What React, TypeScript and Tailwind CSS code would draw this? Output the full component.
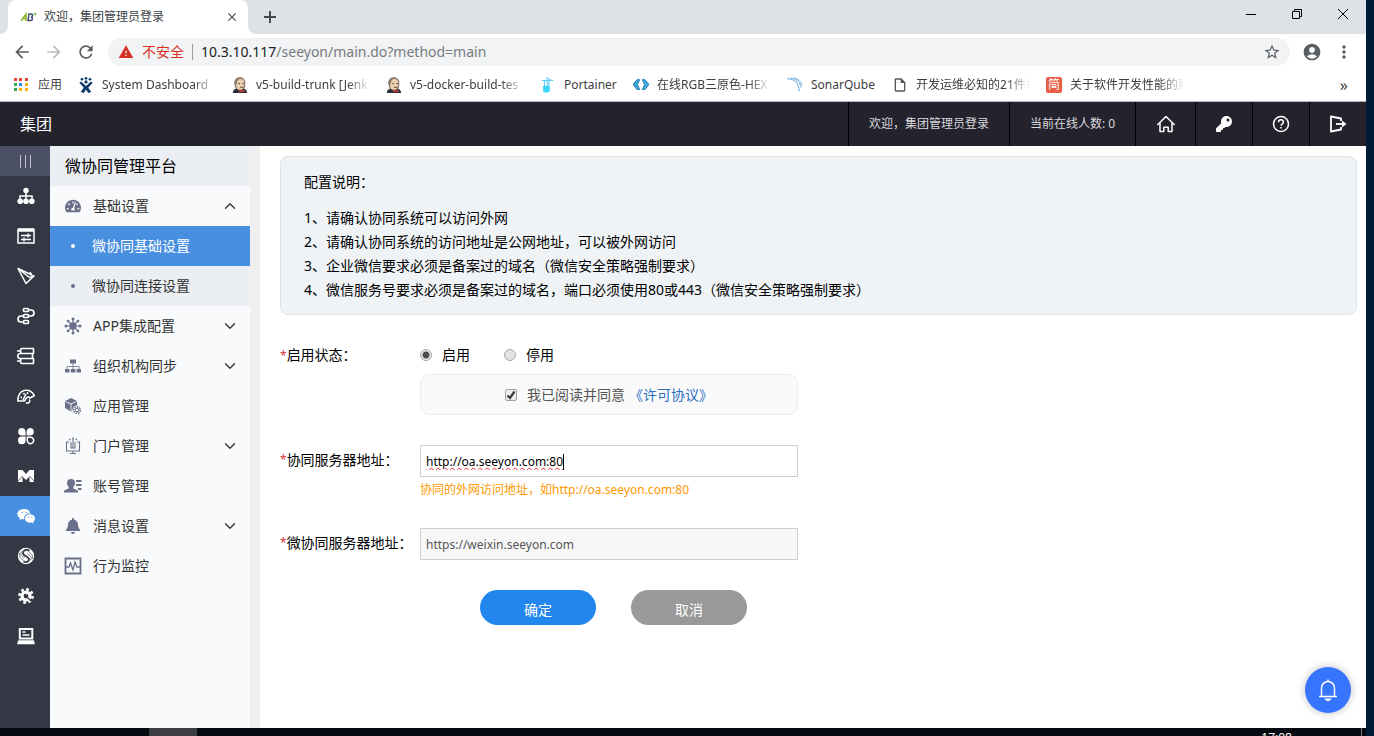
import type { ReactNode } from "react";
import { clsx } from "clsx";
import { ChevronDown, ChevronUp } from "lucide-react";
import { FaBell, FaKey, FaTachometerAlt } from "react-icons/fa";
import {
  MdAccountCircle,
  MdArrowBack,
  MdArrowForward,
  MdClose,
  MdMoreVert,
  MdOutlineInsertDriveFile,
  MdRefresh,
  MdStarBorder,
  MdWarning,
} from "react-icons/md";

type IconProps = { children: ReactNode; className?: string };

// 18px grid, drawn with currentColor
function Icon({ children, className = "size-[18px]" }: IconProps) {
  return (
    <svg
      viewBox="0 0 18 18"
      className={className}
      fill="none"
      stroke="currentColor"
      strokeWidth="1.5"
      aria-hidden="true"
    >
      {children}
    </svg>
  );
}

const jenkinsIcon = (
  <Icon className="size-4">
    <path d="M1 18c0-4 3-5 5-5h6c3 0 5 2 5 5z" fill="#24303a" stroke="none" />
    <path d="M3.500 7c0-4 2.500-6 5.500-6s5.500 2 5.500 6-1.500 8-5.500 8-5.500-4-5.500-8z" fill="#ecd0ae" stroke="#5b4a3f" strokeWidth="1" />
    <path d="M3 9C1.500 3 5 0 9 .5c3 0 4.500 1 5 3C11 2 9 2 7 3 5.500 4 6 7 4.500 9z" fill="#8a7a6a" stroke="none" />
    <path d="M7 7.500h2M11.500 7.500h2M9 11.500h4" stroke="#4a3a30" strokeWidth="1" />
    <path d="M8 14l3 1.500 3-1.500v3.500l-3-1-3 1z" fill="#d33833" stroke="none" />
  </Icon>
);

const bookmarks = [
  {
    title: "System Dashboard",
    width: "w-[114px]",
    icon: (
      <Icon className="size-4">
        <g fill="#0b3a6b" stroke="none">
          <circle cx="4.500" cy="2.500" r="1.500" />
          <circle cx="9" cy="1.500" r="1.500" />
          <circle cx="13.500" cy="2.500" r="1.500" />
          <circle cx="9" cy="5.500" r="1.800" />
          <path d="M3.500 5L9 10l5.500-5 2 1.500-5 5.500 3.500 5-3.500 1L9 14l-2.500 4L3 17l3.500-5-5-5.500z" />
        </g>
      </Icon>
    ),
  },
  { title: "v5-build-trunk [Jenk", width: "w-[114px]", icon: jenkinsIcon },
  { title: "v5-docker-build-tes", width: "w-[114px]", icon: jenkinsIcon },
  {
    title: "Portainer",
    width: "w-[53px]",
    icon: (
      <Icon className="size-4">
        <path d="M2 4h13M8 0v13M8 1l5 3M5 4v9M10 4v6" stroke="#5ccdf6" strokeWidth="1.200" />
        <path d="M3.500 10h7.500v6c-1 2-6.500 2-7.500 0z" fill="#3cd5fb" stroke="none" />
      </Icon>
    ),
  },
  {
    title: "在线RGB三原色-HEX",
    width: "w-[114px]",
    icon: (
      <Icon className="size-4">
        <path
          d="M7.500 3H4.500L0 8.500 4.500 14h3L5 8.500zM10.500 3h3L18 8.500 13.500 14h-3L13 8.500z"
          fill="#42a8dd"
          stroke="#1874ac"
          strokeWidth="1"
        />
      </Icon>
    ),
  },
  {
    title: "SonarQube",
    width: "w-[65px]",
    icon: (
      <Icon className="size-4">
        <path d="M0 2c9 0 13 5 14 14M4 1c6 1 11 5 12 11M8 1c4 1 8 4 9 8" stroke="#64a9dc" strokeWidth="1.100" />
      </Icon>
    ),
  },
  {
    title: "开发运维必知的21件事",
    width: "w-[114px]",
    icon: <MdOutlineInsertDriveFile className="size-4 text-[#55585c]" />,
  },
  {
    title: "关于软件开发性能的那",
    width: "w-[114px]",
    icon: (
      <span className="flex size-4 items-center justify-center rounded-xs bg-[#e65f45] text-xs text-white">简</span>
    ),
  },
];

const appColors = [
  "bg-[#ea4335]", "bg-[#ea4335]", "bg-[#ea4335]",
  "bg-[#34a853]", "bg-[#1a88f0]", "bg-[#fbae08]",
  "bg-[#34a853]", "bg-[#fbae08]", "bg-[#fbae08]",
];

const railItems = [
  {
    label: "组织",
    icon: (
      <Icon>
        <path d="M9 5v8M3 13V9h12v4" />
        <g fill="currentColor" stroke="none">
          <circle cx="9" cy="3.500" r="2.700" />
          <circle cx="3.200" cy="14.300" r="2.800" />
          <circle cx="9" cy="14.300" r="2.800" />
          <circle cx="14.800" cy="14.300" r="2.800" />
        </g>
      </Icon>
    ),
  },
  {
    label: "参数",
    icon: (
      <Icon>
        <path d="M1 2.500h16v13.500H1z" />
        <path d="M1 3h16" strokeWidth="3.500" />
        <path d="M4 8.500h10M11 6.500v4M4 12.500h10M7 10.500v4" strokeWidth="1.400" />
      </Icon>
    ),
  },
  {
    label: "流程",
    icon: (
      <Icon>
        <path d="M1 1.500l8 15 8-7.500zM1 1.500l11.500 9 4.500-1.500M13 5l2 3.500" strokeWidth="1.500" strokeLinejoin="round" />
      </Icon>
    ),
  },
  {
    label: "集成",
    icon: (
      <Icon>
        <g strokeWidth="1.700">
          <rect x="6.500" y="1.500" width="5" height="3" rx="1" />
          <rect x="6.500" y="7.500" width="5" height="3" rx="1" />
          <rect x="6.500" y="13.500" width="5" height="3" rx="1" />
          <path d="M11.500 3H14c4 0 4 6 0 6h-2.500M6.500 9H4c-4 0-4 6 0 6h2.500" />
        </g>
      </Icon>
    ),
  },
  {
    label: "数据",
    icon: (
      <Icon>
        <path
          d="M17 1.500H5c-2 0-2 5 0 5h12M17 6.500H3c-3 0-3 5 0 5h14M17 11.500H5c-2 0-2 5 0 5h12M16.500 1.500v5M15.500 6.500v5M16.500 11.500v5M0 4h4M0 14h4"
          strokeWidth="1.600"
        />
      </Icon>
    ),
  },
  {
    label: "监控",
    icon: (
      <Icon>
        <path d="M.8 14C.8 2 12 0 17.500 8.500L13 11c-1-1.500-3-1.500-4 .5L7.500 14z" strokeLinejoin="round" />
        <path d="M3.500 10l1.500.7M6.500 6l1 1.500M10.500 5v2M6 13l3-6M9 15.500a2 2 0 0 0 3-3" />
      </Icon>
    ),
  },
  {
    label: "应用",
    icon: (
      <Icon>
        <g fill="currentColor" stroke="none">
          <path d="M5 1h0a4 4 0 0 1 3.600 4v3.600H5A3.800 3.800 0 0 1 5 1z" />
          <path d="M13 1h0a3.800 3.800 0 0 1 0 7.600H9.600V5A4 4 0 0 1 13 1z" />
          <path d="M5 9.600h3.600V13.400A3.800 3.800 0 1 1 5 9.600z" />
        </g>
        <path d="M10.300 10.300H13a3.200 3.200 0 1 1-2.700 3z" />
      </Icon>
    ),
  },
  {
    label: "M3",
    icon: (
      <Icon>
        <path d="M1 3h4.500L9 7l3.500-4H17v12h-4.500V9.500L9 13 5.500 9.500V15H1z" fill="currentColor" stroke="none" />
        <path d="M1 14l4.500-5M17 14l-4.500-5" stroke="#343844" strokeWidth=".7" />
      </Icon>
    ),
  },
  {
    label: "微协同",
    active: true,
    icon: (
      <Icon>
        <path
          d="M7 2c4 0 6 2 6.200 4.500C9 6.200 6.300 9 7.500 12.300c-1 0-2-.1-2.800-.4L2.300 13l.6-2C1.300 10 .4 8.600.4 7 .4 4.300 3 2 7 2z"
          fill="currentColor"
          stroke="none"
        />
        <path
          d="M13 7.300c3 0 5 1.900 5 4.200 0 1.400-.8 2.600-1.900 3.300l.4 1.700-2-1c-3.700.7-6.500-1.200-6.500-4 0-2.300 2-4.200 5-4.200z"
          fill="currentColor"
          stroke="none"
        />
        <path d="M4.500 5.500h1.200M8.500 5.500h1.200M10.700 10h1.200M14.200 10h1.200" stroke="#488fe0" strokeWidth="1" />
      </Icon>
    ),
  },
  {
    label: "服务",
    icon: (
      <Icon>
        <circle cx="9" cy="9" r="8.200" fill="currentColor" stroke="none" />
        <path d="M12.500 3.500C9 1.500 6 3.500 6 6c0 3.500 6 3 6 6.500 0 2-3 3.500-5.500 2" stroke="#343844" strokeWidth="1.800" />
        <path
          d="M4.500 4.500c-2 4 1 5 3 6.500M2.500 6c-1 4 2 6 5 8M13.500 13.500c2-4-1-5-3-6.500M15.500 12c1-4-2-6-5-8"
          stroke="#343844"
          strokeWidth=".7"
        />
      </Icon>
    ),
  },
  {
    label: "系统",
    icon: (
      <Icon>
        <circle cx="9" cy="9" r="6.600" strokeWidth="2.600" strokeDasharray="2.700 2.480" />
        <circle cx="9" cy="9" r="4" strokeWidth="3.200" />
        <path d="M7 8l2.500 1.500L14 14" stroke="#343844" strokeWidth="1.200" />
        <path d="M9 7l2-1" strokeWidth="1.800" />
      </Icon>
    ),
  },
  {
    label: "终端",
    icon: (
      <Icon>
        <path d="M2.800 2h12.500v9.500H2.800z" strokeWidth="2" />
        <path d="M1.800 14h14.500l.7 2.500H1z" fill="currentColor" />
        <path d="M5.500 5h3M5.500 8h7" />
      </Icon>
    ),
  },
];

const menuItems = [
  {
    title: "APP集成配置",
    expandable: true,
    icon: (
      <Icon>
        <path d="M9 2v14M2 9h14M4 4l10 10M14 4L4 14" strokeWidth="1.200" />
        <g fill="currentColor" stroke="none">
          <circle cx="9" cy="9" r="3.700" />
          <circle cx="9" cy="2" r="1.500" />
          <circle cx="9" cy="16" r="1.500" />
          <circle cx="2" cy="9" r="1.500" />
          <circle cx="16" cy="9" r="1.500" />
          <circle cx="4" cy="4" r="1.300" />
          <circle cx="14" cy="4" r="1.300" />
          <circle cx="4" cy="14" r="1.300" />
          <circle cx="14" cy="14" r="1.300" />
        </g>
      </Icon>
    ),
  },
  {
    title: "组织机构同步",
    expandable: true,
    icon: (
      <Icon>
        <path d="M9 6v6M3 12V9.500h12V12" strokeWidth=".8" />
        <path d="M6 2.500h6v4H6zM1 12h4.500v3.500H1zM6.800 12h4.500v3.500H6.800zM12.500 12H17v3.500h-4.500z" fill="currentColor" stroke="none" />
      </Icon>
    ),
  },
  {
    title: "应用管理",
    icon: (
      <Icon>
        <path d="M7 1l6 3v7l-6 3.500L1 11V4z" fill="currentColor" stroke="none" />
        <path d="M1.500 4.500L7 7l5.500-2.500M7 7v7" stroke="#f8fafc" strokeWidth=".9" />
        <circle cx="13" cy="13" r="4.500" fill="#f8fafc" stroke="none" />
        <circle cx="13" cy="13" r="3.300" strokeWidth="1.500" strokeDasharray="1.600 .9" />
        <circle cx="13" cy="13" r="1.800" strokeWidth="1" />
      </Icon>
    ),
  },
  {
    title: "门户管理",
    expandable: true,
    icon: (
      <Icon>
        <path d="M5 5H2.500v9h13V5H13M6 16.500h6M9 14v2.500M7 5v6h4V5M9 2v9" strokeWidth="1.100" />
        <path d="M5 2.500h1.500M8.200 1.500h1.600M11.500 2.500H13" strokeWidth="1.600" />
      </Icon>
    ),
  },
  {
    title: "账号管理",
    icon: (
      <Icon>
        <path
          d="M7 2c2.500 0 4 1.500 4 4 0 2-.9 3-1.700 4v1.500l3.700 1.500c1 .5 1 1.500 1 2.500H0c0-1 0-2 1-2.500l3.700-1.500V10C3.900 9 3 8 3 6c0-2.500 1.500-4 4-4z"
          fill="currentColor"
          stroke="none"
        />
        <path d="M12 4h5.500M12 8h5.500M14 12h3.500" strokeWidth="2" />
      </Icon>
    ),
  },
  { title: "消息设置", expandable: true, icon: <FaBell className="size-4" /> },
  {
    title: "行为监控",
    icon: (
      <Icon>
        <path d="M1.500 1.500h15v15h-15z" strokeWidth="1.800" />
        <path d="M2 10h3l1.500-4L9 13l2-8 2 5h3" strokeWidth="1.300" />
      </Icon>
    ),
  },
];

const notes = [
  "1、请确认协同系统可以访问外网",
  "2、请确认协同系统的访问地址是公网地址，可以被外网访问",
  "3、企业微信要求必须是备案过的域名（微信安全策略强制要求）",
  "4、微信服务号要求必须是备案过的域名，端口必须使用80或443（微信安全策略强制要求）",
];

function TabStrip() {
  return (
    <div className="flex h-[34px] bg-[#dee1e6]">
      <div className="flex w-2 bg-white">
        <div className="w-full rounded-br-lg bg-[#dee1e6]" />
      </div>
      <div className="flex w-60 items-center rounded-t-lg bg-white pl-3 pr-[9px]">
        <svg viewBox="0 0 18 12" className="mr-1.5 h-3 w-[18px]" aria-hidden="true" fill="none" strokeWidth="1.500">
          <path d="M1 10l5-7v7M3 7.500h3" stroke="#8dbb2a" />
          <path d="M9 3L8 9.500h2.500c2.500 0 2.500-3 .5-3.300C13 6 13 3 11 3z" stroke="#414b73" />
          <path d="M13.500 3h3M15 1.500v3" stroke="#6bb344" strokeWidth="1" />
        </svg>
        <span className="flex-1 whitespace-nowrap text-xs text-[#3c4043]">欢迎，集团管理员登录</span>
        <button aria-label="关闭标签页">
          <MdClose className="size-3.5 text-[#45494d]" />
        </button>
      </div>
      <div className="flex w-2 bg-white">
        <div className="w-full rounded-bl-lg bg-[#dee1e6]" />
      </div>
      <button aria-label="新标签页" className="ml-2">
        <svg viewBox="0 0 12 12" className="size-3" stroke="#45494d" strokeWidth="2">
          <path d="M6 0v12M0 6h12" />
        </svg>
      </button>
      <div className="ml-auto flex h-7 items-center">
        <button aria-label="最小化" className="flex w-[46px] justify-center">
          <svg viewBox="0 0 10 10" className="size-2.5" stroke="#000">
            <path d="M0 5.500h10" />
          </svg>
        </button>
        <button aria-label="还原" className="flex w-[46px] justify-center">
          <svg viewBox="0 0 10 10" className="size-2.5" fill="none" stroke="#000">
            <path d="M.5 2.500h7v7h-7zM2.500 2.500v-2h7v7h-2" />
          </svg>
        </button>
        <button aria-label="关闭" className="flex w-[46px] justify-center">
          <svg viewBox="0 0 10 10" className="size-2.5" stroke="#000">
            <path d="M0 0l10 10M10 0L0 10" />
          </svg>
        </button>
      </div>
    </div>
  );
}

function AddressBar() {
  return (
    <div className="flex h-9 items-center bg-white pl-3 pr-3 text-[#5a5d61]">
      <button aria-label="后退" className="mr-3">
        <MdArrowBack className="size-5" />
      </button>
      <button aria-label="前进" className="mr-3 text-[#babcbe]">
        <MdArrowForward className="size-5" />
      </button>
      <button aria-label="重新加载" className="mr-3">
        <MdRefresh className="size-5" />
      </button>
      <div className="flex h-7 flex-1 items-center rounded-full bg-[#f1f3f4] pl-2.5 pr-[9px] text-sm">
        <MdWarning className="mr-2 size-4 text-[#d93025]" />
        <span className="whitespace-nowrap text-[#d93025]">不安全</span>
        <span className="mx-2 h-4 w-px bg-[#9a9da1]" />
        <span className="flex-1 whitespace-nowrap text-[#777b80]">
          <span className="text-[#202124]">10.3.10.117</span>/seeyon/main.do?method=main
        </span>
        <MdStarBorder className="size-[18px]" />
      </div>
      <button aria-label="用户" className="ml-3">
        <MdAccountCircle className="size-5" />
      </button>
      <button aria-label="更多" className="ml-3">
        <MdMoreVert className="size-5" />
      </button>
    </div>
  );
}

function BookmarkBar() {
  return (
    <div className="flex h-8 items-center gap-4 border-b border-[#b5b5b9] bg-white pb-0.5 pl-3.5 pr-[18px] text-xs text-[#3c4043]">
      <a href="#apps" className="flex items-center gap-2">
        <span className="grid w-4 grid-cols-3 gap-y-0.5">
          {appColors.map((color, i) => (
            <span key={i} className={clsx("size-[3px]", color)} />
          ))}
        </span>
        应用
      </a>
      {bookmarks.map((b) => (
        <a key={b.title} href="#bookmark" className="flex shrink-0 items-center gap-2">
          {b.icon}
          <span
            className={clsx(
              "overflow-hidden whitespace-nowrap",
              b.width,
              b.width === "w-[114px]" && "[mask-image:linear-gradient(to_right,black_80%,transparent)]"
            )}
          >
            {b.title}
          </span>
        </a>
      ))}
      <button aria-label="更多书签" className="ml-auto text-base">
        »
      </button>
    </div>
  );
}

function Header() {
  const cell = "flex items-center justify-center border-l border-black";
  return (
    <header className="flex h-11 bg-[#24222c] text-xs text-[#d8d8dc]">
      <h1 className="flex flex-1 items-center pl-5 text-base text-white">集团</h1>
      <div className={clsx(cell, "w-[161px]")}>欢迎，集团管理员登录</div>
      <div className={clsx(cell, "w-[126px]")}>当前在线人数: 0</div>
      <button aria-label="首页" className={clsx(cell, "w-[60px] text-white")}>
        <Icon>
          <path
            d="M.8 9.500L9 1.500l8.200 8M3 8.500v8h3.800v-4.300h4.400v4.300H15v-8"
            strokeLinejoin="round"
            strokeLinecap="round"
          />
        </Icon>
      </button>
      <button aria-label="密码" className={clsx(cell, "w-[57px] text-white")}>
        <FaKey className="size-4" />
      </button>
      <button aria-label="帮助" className={clsx(cell, "w-[57px] text-white")}>
        <Icon>
          <circle cx="9" cy="9" r="7.500" />
          <path d="M6.500 7.200C6.500 4 11.500 4 11.500 7c0 1.800-2.500 1.800-2.500 3.700M9 12v1.500" />
        </Icon>
      </button>
      <button aria-label="退出" className={clsx(cell, "w-[57px] text-white")}>
        <Icon>
          <path d="M12 6V3.500L2 1.500v15l10-2V12" strokeWidth="1.800" strokeLinejoin="round" />
          <path d="M7 9h7" strokeWidth="1.800" />
          <path d="M13 5.500L17.500 9 13 12.500z" fill="currentColor" stroke="none" />
        </Icon>
      </button>
    </header>
  );
}

function Rail() {
  return (
    <nav className="w-[50px] shrink-0 bg-[#343844] text-white">
      <button aria-label="展开菜单" className="flex h-[30px] w-full items-center justify-center gap-1 bg-[#4b5064]">
        <span className="h-[13px] w-px bg-[#c0c2ca]" />
        <span className="h-[13px] w-px bg-[#c0c2ca]" />
        <span className="h-[13px] w-px bg-[#c0c2ca]" />
      </button>
      {railItems.map((item) => (
        <button
          key={item.label}
          aria-label={item.label}
          className={clsx("flex h-10 w-full items-center justify-center pl-px", item.active && "bg-[#488fe0]")}
        >
          {item.icon}
        </button>
      ))}
    </nav>
  );
}

function MenuRow({ title, icon, trailing }: { title: string; icon: ReactNode; trailing?: ReactNode }) {
  return (
    <button className="flex h-10 w-full items-center pl-3.5 pr-[11px] text-left">
      <span className="mr-[11px] flex w-[18px] justify-center text-[#6a7089]">{icon}</span>
      <span className="flex-1">{title}</span>
      {trailing}
    </button>
  );
}

function SideMenu() {
  return (
    <aside className="w-[210px] shrink-0 border-r-10 border-[#efefef] bg-[#f8fafc] text-sm text-[#333]">
      <h2 className="flex h-10 items-center bg-[#ebeef2] pl-[15px] text-base text-black">微协同管理平台</h2>
      <MenuRow
        title="基础设置"
        icon={<FaTachometerAlt className="size-4" />}
        trailing={<ChevronUp className="size-[18px]" strokeWidth={1.8} />}
      />
      <a href="#base" className="flex h-10 items-center bg-[#488fe0] pl-[21px] text-white">
        <span className="mr-[17px] size-1 rounded-full bg-white" />
        微协同基础设置
      </a>
      <a href="#connect" className="flex h-10 items-center bg-[#ebeef2] pl-[21px]">
        <span className="mr-[17px] size-1 rounded-full bg-[#6a7089]" />
        微协同连接设置
      </a>
      {menuItems.map((item) => (
        <MenuRow
          key={item.title}
          title={item.title}
          icon={item.icon}
          trailing={item.expandable && <ChevronDown className="size-[18px]" strokeWidth={1.8} />}
        />
      ))}
    </aside>
  );
}

const radioClass =
  "mr-2.5 size-3 appearance-none rounded-full border border-[#a9a9a9] bg-[#e3e3e3] checked:bg-[radial-gradient(circle,#4d4d4d_3px,#e9e9e9_4px)]";

function Required() {
  return <span className="text-xs text-[#d9363e]">*</span>;
}

function SettingsForm() {
  return (
    <form className="pt-[30px] text-sm text-black" onSubmit={(e) => e.preventDefault()}>
      <fieldset className="flex h-5 items-center">
        <legend className="float-left w-35">
          <Required />
          启用状态：
        </legend>
        <label className="mr-[34px] flex items-center">
          <input type="radio" name="status" defaultChecked className={radioClass} />
          启用
        </label>
        <label className="flex items-center">
          <input type="radio" name="status" className={radioClass} />
          停用
        </label>
      </fieldset>

      <div className="ml-35 mt-[9px] flex h-[41px] w-[378px] items-center justify-center rounded-[10px] border border-[#ececec] bg-[#fafafa] text-[#555]">
        <span className="relative mr-2.5 flex">
          <input
            id="agree"
            type="checkbox"
            defaultChecked
            className="size-3 appearance-none rounded-xs border border-[#a0a0a0] bg-[#ececec]"
          />
          <svg
            viewBox="0 0 12 12"
            className="pointer-events-none absolute inset-0 size-3"
            fill="none"
            stroke="#3a3a3a"
            strokeWidth="2.200"
          >
            <path d="M2.500 6.500L5 9l4.500-6.500" />
          </svg>
        </span>
        <label htmlFor="agree" className="mr-1">
          我已阅读并同意
        </label>
        <a href="#license" className="text-[#2a6fc0]">
          《许可协议》
        </a>
      </div>

      <div className="mt-[30px] flex">
        <label htmlFor="server" className="flex h-[30px] w-35 items-center">
          <Required />
          协同服务器地址：
        </label>
        <div className="w-[378px]">
          <div className="flex h-8 items-center border border-[#d0d0d0] pl-[5px] pt-px text-xs">
            <input
              id="server"
              defaultValue="http://oa.seeyon.com:80"
              spellCheck={false}
              className="field-sizing-content underline decoration-red-500 decoration-wavy decoration-1 outline-none"
            />
            <span className="h-4 w-px bg-black" />
          </div>
          <p className="mt-1 h-[18px] text-xs leading-[18px] text-[#ff9900]">
            协同的外网访问地址，如http://oa.seeyon.com:80
          </p>
        </div>
      </div>

      <div className="mt-[29px] flex">
        <label htmlFor="wx-server" className="flex h-[30px] w-35 items-center">
          <Required />
          微协同服务器地址：
        </label>
        <input
          id="wx-server"
          readOnly
          defaultValue="https://weixin.seeyon.com"
          className="h-8 w-[378px] border border-[#d0d0d0] bg-[#f7f7f7] pl-[5px] text-xs text-[#555] outline-none"
        />
      </div>

      <div className="ml-50 mt-[30px] flex gap-[35px] text-white">
        <button type="submit" className="h-[35px] w-[116px] rounded-full bg-[#2186ee] pt-1">
          确定
        </button>
        <button type="button" className="h-[35px] w-[116px] rounded-full bg-[#999] pt-1">
          取消
        </button>
      </div>
    </form>
  );
}

export default function App() {
  return (
    <div className="flex min-h-screen bg-[#001a38] font-['Noto_Sans','Noto_Sans_CJK_SC',sans-serif]">
      <div className="flex min-w-0 flex-1 flex-col">
        <TabStrip />
        <AddressBar />
        <BookmarkBar />
        <Header />
        <div className="relative flex flex-1 bg-white">
          <Rail />
          <SideMenu />
          <main className="min-w-0 flex-1 pl-5 pr-[9px] pt-2.5">
            <section className="rounded-lg border border-[#dde4ea] bg-[#eff3f6] px-[23px] pb-3 pt-[13px] text-sm leading-6 text-black">
              <h3 className="mb-3">配置说明：</h3>
              {notes.map((note) => (
                <p key={note}>{note}</p>
              ))}
            </section>
            <SettingsForm />
          </main>
          <button
            aria-label="消息提醒"
            className="absolute bottom-[15px] right-[15px] flex size-[46px] items-center justify-center rounded-full bg-[#3875ff] text-white shadow-[0_0_8px_rgba(0,0,0,0.25)]"
          >
            <svg viewBox="0 0 20 24" className="h-6 w-5" fill="none" stroke="currentColor" strokeWidth="1.500">
              <path d="M3.500 18.500V10a6.500 6.500 0 0 1 13 0v8.500M1 18.500h18M10 1.500v2" />
              <path d="M8 21.200h4l-1 1H9z" fill="currentColor" />
            </svg>
          </button>
        </div>
        <footer className="flex h-2 overflow-hidden bg-[#070a11] text-xs text-white">
          <div className="ml-[149px] h-2 w-12 bg-[#3c3e43]" />
          <span className="ml-auto mr-[69px] mt-0.5 leading-4">17:08</span>
          <div className="mr-1 w-px bg-[#777]" />
        </footer>
      </div>
      <div className="w-2 shrink-0" />
    </div>
  );
}
